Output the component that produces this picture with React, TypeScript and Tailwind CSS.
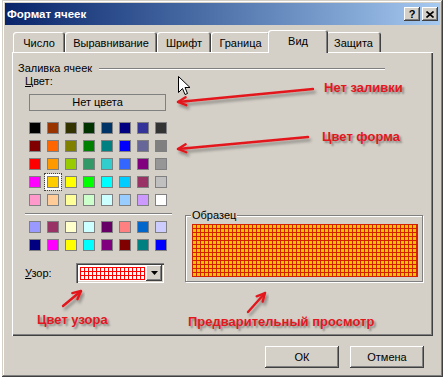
import React from "react";

const main = [
  ["#000000", "#993300", "#333300", "#003300", "#003366", "#000080", "#333399", "#333333"],
  ["#800000", "#FF6600", "#808000", "#008000", "#008080", "#0000FF", "#666699", "#808080"],
  ["#FF0000", "#FF9900", "#99CC00", "#339966", "#33CCCC", "#3366FF", "#800080", "#969696"],
  ["#FF00FF", "#FFCC00", "#FFFF00", "#00FF00", "#00FFFF", "#00CCFF", "#993366", "#C0C0C0"],
  ["#FF99CC", "#FFCC99", "#FFFF99", "#CCFFCC", "#CCFFFF", "#99CCFF", "#CC99FF", "#FFFFFF"],
];
const extra = [
  ["#9999FF", "#993366", "#FFFFCC", "#CCFFFF", "#660066", "#FF8080", "#0066CC", "#CCCCFF"],
  ["#000080", "#FF00FF", "#FFFF00", "#00FFFF", "#800080", "#800000", "#008080", "#0000FF"],
];

const tabs: [string, number][] = [
  ["Число", 52],
  ["Выравнивание", 92],
  ["Шрифт", 54],
  ["Граница", 59],
  ["Вид", 56],
  ["Защита", 55],
];

const raised =
  "shadow-[inset_-1px_-1px_0_#404040,inset_1px_1px_0_#ffffff,inset_-2px_-2px_0_#808080,inset_2px_2px_0_#d4d0c8]";

function Swatch({ c, sel }: { c: string; sel?: boolean }) {
  return (
    <div
      className={
        sel
          ? "w-[12px] h-[12px] border border-[#808080] shadow-[0_0_0_2px_#ffffff] outline-1 outline-dotted outline-[#404040] outline-offset-[2px]"
          : "w-[12px] h-[12px] border border-[#808080]"
      }
      style={{ backgroundColor: c }}
    />
  );
}

function Arrow({ x1, y1, x2, y2 }: { x1: number; y1: number; x2: number; y2: number }) {
  const dx = x2 - x1;
  const dy = y2 - y1;
  const len = Math.hypot(dx, dy);
  const ux = dx / len;
  const uy = dy / len;
  const px = -uy;
  const py = ux;
  const b = 8;
  const w = 4;
  const ax = x2 - ux * b + px * w;
  const ay = y2 - uy * b + py * w;
  const bx = x2 - ux * b - px * w;
  const by = y2 - uy * b - py * w;
  return (
    <g filter="url(#sh)" stroke="#e3171e" strokeWidth={2.4} fill="none" strokeLinecap="round" strokeLinejoin="round">
      <line x1={x1} y1={y1} x2={x2} y2={y2} />
      <polyline points={`${ax},${ay} ${x2},${y2} ${bx},${by}`} />
    </g>
  );
}

function Grid({ w, h, bg, line }: { w: number; h: number; bg: string; line: string }) {
  const xs: number[] = [];
  for (let x = 0; x < w; x += 4) xs.push(x);
  const ys: number[] = [];
  for (let y = 0; y < h; y += 4) ys.push(y);
  return (
    <svg width={w} height={h} className="block" shapeRendering="crispEdges">
      <rect width={w} height={h} fill={bg} />
      {xs.map((x) => (
        <rect key={`x${x}`} x={x} y={0} width={1} height={h} fill={line} />
      ))}
      {ys.map((y) => (
        <rect key={`y${y}`} x={0} y={y} width={w} height={1} fill={line} />
      ))}
      <rect x={w - 1} y={0} width={1} height={h} fill={line} />
      <rect x={0} y={h - 1} width={w} height={1} fill={line} />
    </svg>
  );
}

const annot =
  "absolute font-bold text-[13px] leading-[16px] text-[#e3171e] whitespace-nowrap [text-shadow:2px_2px_2px_rgba(0,0,0,0.35)]";

export default function App() {
  return (
    <div className="relative w-[445px] h-[382px] overflow-hidden bg-white font-['Liberation_Sans',Arial,sans-serif] text-[11px] leading-[13px] text-black">
      <div className="ml-[2px] w-[441px] h-[377px] bg-[#d4d0c8] p-[3px] flex flex-col shadow-[inset_-1px_-1px_0_#404040,inset_1px_1px_0_#d4d0c8,inset_-2px_-2px_0_#808080,inset_2px_2px_0_#ffffff]">
        {/* Title bar */}
        <div className="h-[22px] flex items-center pl-[2px] pr-[2px] bg-linear-to-r from-[#0a246a] to-[#a6caf0]">
          <span className="font-bold text-white text-[11.5px]">Формат ячеек</span>
          <div className="ml-auto flex gap-[2px]">
            <div className={`w-[16px] h-[14px] bg-[#d4d0c8] ${raised} flex items-center justify-center font-bold text-[11px] leading-none`}>
              ?
            </div>
            <div className={`w-[16px] h-[14px] bg-[#d4d0c8] ${raised} flex items-center justify-center`}>
              <svg width="8" height="7" viewBox="0 0 8 7">
                <path d="M0.5 0.5 L7.5 6.5 M7.5 0.5 L0.5 6.5" stroke="#000" strokeWidth="1.6" />
              </svg>
            </div>
          </div>
        </div>

        {/* Tabs + panel */}
        <div className="px-[7px] pt-[5px]">
          <div className="flex items-end h-[22px] pl-[1px]">
            {tabs.map(([t, w]) =>
              t === "Вид" ? (
                <div
                  key={t}
                  className="relative z-10 -mx-[2px] h-[23px] -mb-[1px] bg-[#d4d0c8] rounded-t-[3px] flex items-start justify-center pt-[5px] shadow-[inset_1px_1px_0_#ffffff,inset_-1px_0_0_#404040,inset_-2px_0_0_#808080]"
                  style={{ width: w + 4 }}
                >
                  {t}
                </div>
              ) : (
                <div
                  key={t}
                  className="h-[20px] bg-[#d4d0c8] rounded-t-[3px] flex items-center justify-center pt-[2px] shadow-[inset_1px_1px_0_#ffffff,inset_-1px_0_0_#404040,inset_-2px_0_0_#808080]"
                  style={{ width: w }}
                >
                  {t}
                </div>
              )
            )}
          </div>
          <div className="h-[284px] shadow-[inset_1px_1px_0_#ffffff,inset_-1px_-1px_0_#404040,inset_-2px_-2px_0_#808080] pt-[10px] pl-[6px]">
            <div className="flex items-center">
              <span>Заливка ячеек</span>
              <div className="ml-auto mr-[48px] w-[286px] h-[2px] border-t border-[#808080] border-b border-b-white" />
            </div>
            <div className="flex items-end pl-[7px]">
              <div className="w-[147px] flex flex-col">
                <div>
                  <span className="underline">Ц</span>вет:
                </div>
                <div className="ml-[4px] mt-[6px] w-[137px] h-[17px] border border-[#808080] flex items-center justify-center">
                  Нет цвета
                </div>
                <div className="ml-[4px] mt-[11px] grid grid-cols-[repeat(8,12px)] gap-[6px]">
                  {main.flatMap((row, r) =>
                    row.map((c, i) => <Swatch key={`m${r}-${i}`} c={c} sel={r === 3 && i === 1} />)
                  )}
                </div>
                <div className="mt-[7px] w-[147px] h-[2px] border-t border-[#808080] border-b border-b-white" />
                <div className="ml-[4px] mt-[6px] grid grid-cols-[repeat(8,12px)] gap-[6px]">
                  {extra.flatMap((row, r) => row.map((c, i) => <Swatch key={`e${r}-${i}`} c={c} />))}
                </div>
                <div className="mt-[12px] flex items-center">
                  <div className="w-[51px]">
                    <span className="underline">У</span>зор:
                  </div>
                  <div className="w-[88px] h-[20px] flex bg-white p-[2px] shadow-[inset_1px_1px_0_#808080,inset_2px_2px_0_#404040,inset_-1px_-1px_0_#ffffff,inset_-2px_-2px_0_#d4d0c8]">
                    <div className="flex-1 flex items-center pl-[2px]">
                      <Grid w={65} h={13} bg="#ffffff" line="#ff0000" />
                    </div>
                    <div className={`w-[16px] h-[16px] bg-[#d4d0c8] ${raised} flex items-center justify-center`}>
                      <svg width="7" height="4" viewBox="0 0 7 4">
                        <path d="M0 0 H7 L3.5 4 Z" fill="#000" />
                      </svg>
                    </div>
                  </div>
                </div>
              </div>
              <div className="relative ml-[13px] mb-[1px] w-[238px] h-[67px] border border-[#808080] shadow-[1px_1px_0_#ffffff,inset_1px_1px_0_#ffffff]">
                <span className="absolute -top-[7px] left-[5px] bg-[#d4d0c8] px-[1px]">Образец</span>
                <div className="absolute left-[6px] top-[8px]">
                  <Grid w={226} h={53} bg="#ffc000" line="#d42000" />
                </div>
              </div>
            </div>
          </div>
        </div>

        {/* Buttons */}
        <div className="mt-[10px] flex justify-end gap-[11px] pr-[16px]">
          <div className={`w-[74px] h-[22px] bg-[#d4d0c8] ${raised} flex items-center justify-center`}>ОК</div>
          <div className={`w-[74px] h-[22px] bg-[#d4d0c8] ${raised} flex items-center justify-center`}>Отмена</div>
        </div>
      </div>

      {/* Annotations */}
      <svg className="absolute inset-0 pointer-events-none" width="445" height="382">
        <defs>
          <filter id="sh" x="-20%" y="-50%" width="140%" height="200%">
            <feDropShadow dx="2" dy="3" stdDeviation="1.5" floodColor="#000" floodOpacity="0.35" />
          </filter>
        </defs>
        <Arrow x1={313} y1={89} x2={178} y2={102} />
        <Arrow x1={308} y1={137} x2={178} y2={149} />
        <Arrow x1={63} y1={306} x2={81} y2={291} />
        <Arrow x1={248} y1={312} x2={265} y2={293} />
        <g transform="translate(178 76)">
          <path d="M0.5 0.5 L0.5 16.5 L4.5 12.5 L7 18.5 L9.5 17.5 L7 11.5 L12 11.5 Z" fill="#fff" stroke="#000" strokeWidth="1" />
        </g>
      </svg>
      <span className={annot} style={{ left: 324, top: 80 }}>Нет заливки</span>
      <span className={annot} style={{ left: 322, top: 129 }}>Цвет форма</span>
      <span className={annot} style={{ left: 37, top: 312 }}>Цвет узора</span>
      <span className={annot} style={{ left: 188, top: 314 }}>Предварительный просмотр</span>
    </div>
  );
}
